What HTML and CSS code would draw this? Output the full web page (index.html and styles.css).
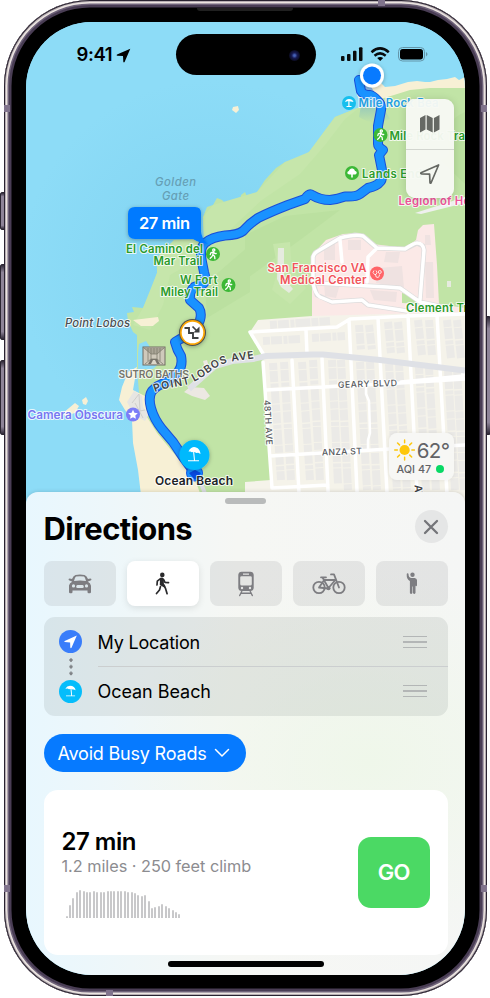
FILE: index.html
```html
<!DOCTYPE html>
<html lang="en">
<head>
<meta charset="utf-8">
<title>Directions</title>
<link rel="stylesheet" href="styles.css">
</head>
<body>
<div class="stage">
  <i class="key key-action"></i><i class="key key-up"></i><i class="key key-down"></i><i class="key key-power"></i>
  <div class="phone">
    <i class="band band-tl"></i><i class="band band-tr"></i><i class="band band-bl"></i><i class="band band-br"></i><i class="band band-top"></i><i class="band band-bottom"></i>
    <i class="speaker"></i>
    <main class="screen">
      <svg class="map" viewBox="26 22 439 490" width="439" height="490">
        <defs>
          <radialGradient id="sea" gradientUnits="userSpaceOnUse" cx="210" cy="270" r="190">
            <stop offset="0" stop-color="#80d3f1"/><stop offset="1" stop-color="#8ddcf7"/>
          </radialGradient>
          <linearGradient id="beam" x1="0" y1="0" x2="0" y2="1">
            <stop offset="0" stop-color="#0a74ff" stop-opacity=".6"/><stop offset="1" stop-color="#0a74ff" stop-opacity="0"/>
          </linearGradient>
          <filter id="soft" x="-50%" y="-50%" width="200%" height="200%"><feDropShadow dx="0" dy="1" stdDeviation="2" flood-opacity=".3"/></filter>
          <path id="lobos" d="M155 392 C164 388 178 387 189 384 C205 378 213 367 226 363 C236 360 246 360 256 358"/>
          <path id="trip" d="M359 80 361 91Q363 95 370 95C374 96 376 99 378 101Q382 105 381 110L378 126 378 144Q378 147 383 150L379 155 382 170Q383 180 380 182 377 186 368 188L360 194Q356 197 345 196.500 338 199 330 200 320 200 312 195 309 193 305 199L288 205Q270 212 258 218 249 224 243 231 238 235 225 235.500 212 237 205 243 199 248 202 262L204 272Q207 281 203 284L194 287Q189 292 190 300L199 308Q202 313 200 320L195 331Q182 338 175 342 177 350 181 356 183 366 178 372L167 382Q157 385 152 391 148 397 151 408 154 419 162 429L173 442 183 457 194 472"/>
          <g id="walker"><circle cx=".8" cy="-4" r="1.1"/><path d="M.4-2.3-.2.8 1.6 2.3 1.9 4.6M-.1.8-1.2 2.8-2.8 4.2M.3-2.2-2.2-1.2-2.7.6M.5-2 1.8-.3 3.2-.5"/></g>
        </defs>
        <rect x="26" y="22" width="440" height="490" fill="url(#sea)"/>
        <path class="sand" d="M465 77 459 80 455 77 447 79 438 80 430 82 425 82 417 81 408 82 395 86 385 87 377 79 362 82 357 95 362 104 465 110Z"/>
        <path class="green" d="M465 88 430 88 410 90 394 95 384 98 372 100 360 107 345 113 335 117 326 129 318 140 309 152 300 159 285 162 276 168 265 180 257 192 248 199 245 192 241 195 240 201 232 202 227 205 222 200 217 198 213 205 207 207 203 217 204 239 174 240 168 254 157 257 157 273 150 293 143 308 132 307 134 312 127 313 128 321 133 332 137 335 137 370 150 512 465 512Z"/>
        <path class="green-light" d="M360 107 335 117 309 152 285 162 257 192 213 205 203 217 204 240 174 240 157 257 157 273 143 308 133 325 150 330 163 305 170 275 205 255 238 222 262 200 300 174 325 145 345 119Z"/>
        <g class="green-deep">
          <path d="M465 112 Q444 120 448 145 Q452 158 440 160 L465 184Z"/>
          <path d="M205 284 250 245 250 292 207 318Z"/>
          <path d="M245 235 285 216 340 210 300 240 245 280Z"/>
        </g>
        <path class="green-light" d="M273 244 290 242 292 270 306 288 290 304 272 290 278 270Z"/>
        <path d="M278 248h6v30l9 11-4 4-8-6-4-8Zm169 33h4v6h-4Z" fill="#e6ebdf"/>
        <path d="M415 213 465 197V203L421 214Z" fill="#eff0ef"/>
        <path d="M138 353 139 344 146 341 150 347 164 350 164 359 153 369 138 369Z" fill="#8ddcf7"/>
        <path class="sand" d="M137 367 128 372 122 387 119 400 125 410 132 420 133 443 138 470 143 512 207 512 197 485 187 469 176 456 157 433 147 417 145 396 133 390Z"/>
        <path class="sand" d="M133 320 158 317 159 321 154 325 153 326 141 326Z"/>
        <path class="sand" d="M63 413 75 403 79 406 75 413 65 416ZM82 400 86 397 88 401 86 405 83 404ZM233 107l5-1 1 4-3 3-4-3Z"/>
        <path d="M127 402 134 391 142 396 143 407 149 414 145 421 134 415Z" fill="#e7e6e2"/>
        <path d="m132 403 7-9 1 17 5-1m-10-7 8 15" fill="none" stroke="#d0cfcb"/>
        <path d="M184 392 190 387 204 388 210 396 205 400 192 396ZM203 361l4-1 2 7-4 1Z" fill="#ece8e2"/>

        <path d="M312 255 326 240 343 234 359 233 373 244 405 248 416 240 418 230 423 225 434 224 437 265 439 304 465 308 465 320 312 322Z" fill="#fbe9e7"/>
        <path d="M402 293 411 295 423 304 402 303Z" fill="#bfe3a5"/>
        <path d="M258 320 312 316 465 312 465 512 245 512 245 482 271 480 263 355 250 332Z" fill="#f5f3ea"/>
        <path d="M324 248 335 243 335 260 324 260ZM348 240 361 240 361 250 348 250ZM324 283 340 284 336 298 325 296ZM379 268 402 266 404 288 376 283ZM386 252 400 252 398 263 384 262ZM425 235 430 235 431 245 425 245ZM425 262 433 262 434 298 426 298ZM370 290 397 292 396 302 374 300Z" fill="#efe2e1"/>
        <g class="blocks">
          <path d="M273 363 281 480M284 362 291 480M302 362 310 480M313 360 320 480M332 360 338 484M341 360 348 490M360 362 367 490M370 362 377 490M389 364 397 490M399 364 407 490M419 367 426 490M429 368 436 490M448 370 455 490M457 370 464 490M263 341 300 339M312 338 345 336M359 325 361 350M369 325 372 350M388 322 391 353M398 322 401 353M418 320 422 355M429 320 432 355M447 320 451 358M457 320 461 358M270 325 330 321"/>
        </g>
        <g class="road-edge">
          <path d="M420 298V302M313 283V257L315 253 340 238 355 235 363 236 377 248 405 249 417 243 423 246 424 250 420 300M313 283 317 295 332 302 362 300 368 305 407 311M317 283 387 287 400 288 420 302 439 306"/>
        </g>
        <g class="road">
          <path d="M313 283V257Q314 253 318 251L340 238Q355 234 363 236L377 248 405 249Q414 243 417 243 423 243 424 250L420 300M313 283Q315 294 320 297L332 302 362 300 368 305 407 311M317 283 387 287 400 288 420 302 439 306M340 240 342 262M377 248 368 257 367 282"/>
          <path d="M250 332 337 327 350 319 407 316 465 314M250 332 265 357M266 390 323 387 400 383 465 379M401 382 463 376V371M270 456 390 449 465 445M272 488 328 485M263 362 272 488M292 360 300 512M322 358 329 512M349 320 358 512M378 318 388 512M408 315 418 512M437 315 448 512M306 330 307 354"/>
          <path class="thin" d="M366 387 366 394 369 401 370 433 368 440 368 449"/>
        </g>
        <path d="M189 389 215 366 232 361 253 359 266 356 313 354.500 323 354.500 380 360 465 370.500" class="avenue"/>
        <path d="M199 478 212 512" stroke="#d9dbe0" stroke-width="4"/>

        <path d="M366 78 390 119Q374 127 359 117Z" fill="url(#beam)"/>
        <g class="route">
          <use href="#trip" class="route-case"/>
          <use href="#trip" class="route-fill"/>
        </g>
        <circle cx="194.500" cy="473" r="8" fill="#1691ff" stroke="#1556e8"/>
        <path d="m189 473 6 7 6-7-6-3Z" fill="#0648df"/>
        <circle cx="372" cy="75.500" r="12" fill="#fff" filter="url(#soft)"/><circle cx="372" cy="75.500" r="9" fill="#087aff"/>

        <g class="label">
          <text class="water" x="155" y="186" textLength="41">Golden</text>
          <text class="water" x="162" y="200" textLength="27">Gate</text>
          <text class="cape" x="65" y="327" textLength="65">Point Lobos</text>
          <text class="trail" x="126" y="253" textLength="77">El Camino del</text>
          <text class="trail" x="153.500" y="264.500" textLength="49">Mar Trail</text>
          <text class="trail" x="180" y="283.500" textLength="37.500">W Fort</text>
          <text class="trail" x="160.500" y="296" textLength="57.500">Miley Trail</text>
          <text class="beach" x="358.500" y="107" textLength="80">Mile Rock Bea</text>
          <text class="trail" x="389.500" y="139.500" textLength="75.500">Mile Rock Tra</text>
          <text class="trail" x="362" y="178" textLength="60">Lands End</text>
          <text class="museum" x="398.500" y="205" textLength="79">Legion of Hon</text>
          <text class="hospital" x="267.500" y="272" textLength="99">San Francisco VA</text>
          <text class="hospital" x="280" y="284" textLength="86.500">Medical Center</text>
          <text class="trail" x="406" y="312" textLength="75">Clement Trail</text>
          <text class="ruin" x="118.500" y="378" textLength="70.500">SUTRO BATHS</text>
          <text class="attraction" x="27.500" y="418.500" textLength="95.500">Camera Obscura</text>
          <text class="place" x="155" y="484.500" textLength="78">Ocean Beach</text>
          <text class="street" x="338" y="388" textLength="59" transform="rotate(-2 338 387)">GEARY BLVD</text>
          <text class="street" x="322" y="455.500" textLength="40" transform="rotate(-2 322 455)">ANZA ST</text>
          <text class="street" textLength="45" transform="translate(264 400) rotate(87)">48TH AVE</text>
          <text class="street-major" transform="translate(414.500 485) rotate(87)">AVE</text>
          <text class="street-major"><textPath href="#lobos" textLength="106">POINT LOBOS AVE</textPath></text>
        </g>

        <g class="walk-pin">
          <circle cx="213" cy="254" r="7"/><circle cx="228.500" cy="285" r="7"/><circle cx="380.500" cy="135" r="7"/><circle cx="352" cy="173" r="7"/>
          <use href="#walker" transform="translate(213 254)"/><use href="#walker" transform="translate(228.500 285)"/><use href="#walker" transform="translate(380.500 135)"/>
        </g>
        <path d="M347.500 173.500c-.6-2 1.500-2.500 1.500-2.500s.5-2.500 3-2.500 3 2.500 3 2.500 2.500.5 1.500 2.500c-.7 1.500-3.700 1-3.700 1v3h-1.600v-3s-3 .4-3.700-1Z" fill="#fff"/>
        <circle cx="349" cy="103" r="7" fill="#16bfee"/>
        <path d="M345 102q1-3 4-3 3.500 0 4.500 3l-4-.8v4.800h2v1h-5v-1h1.800v-5Z" fill="#fff"/>
        <circle cx="377" cy="273.500" r="7" fill="#ff6468"/>
        <g fill="none" stroke="#fff" stroke-width=".8"><path d="m374 270.500-1 2 1.500 2h1.500l1-2-1-2M375.500 274.500q0 3.500 2.500 3 1.500-.5 1.500-3"/><circle cx="379.800" cy="272" r="1.500"/></g>
        <circle cx="133" cy="414.500" r="7" fill="#7c7df7"/>
        <path d="m133 409.700 1.400 3.100 3.400.4-2.500 2.300.6 3.300-2.900-1.600-2.900 1.600.6-3.300-2.500-2.300 3.400-.4Z" fill="#fff"/>
        <g><rect x="143" y="347" width="22" height="18" fill="#cfc9bb" stroke="#716d63"/><path d="M144 348h20l-7 6h-6Z" fill="#aaa597"/><path d="M144 348 151 354v5l-6 5M164 348 157 354v5l6 5M151 354h6M151 359h6M148 348v13m12-13v13M151 348v6m6-6v6m-3-6v6" fill="none" stroke="#827e70" stroke-width=".8"/><path d="m151 359-3 5h12l-3-5Z" fill="#77736a"/><path d="m153 360-2 4h6l-2-4Z" fill="#ddd7c9"/></g>
        <g filter="url(#soft)"><circle cx="192.500" cy="332.500" r="13.500" fill="#50524f"/><circle cx="192.500" cy="332.500" r="12.500" fill="#fca600"/><circle cx="192.500" cy="332.500" r="10.800" fill="#fff"/></g>
        <path d="M184.500 328h4.500v5h4v5h5.500" fill="none" stroke="#3f4142" stroke-width="1.900"/>
        <path d="m192.500 326.500 4 4" stroke="#3f4142" stroke-width="1.700"/><path d="M199.500 326.500v6h-6Z" fill="#3f4142"/>
        <circle cx="194.500" cy="455" r="15" fill="#05b9fd" filter="url(#soft)"/>
        <path d="M188.500 451.500c1.500-3.500 4-4.500 5.500-4.500 4 .3 6.300 3.300 6.500 7l-2.300-1.200-1.800.3-1.900-1-.3.200.8 8h4v1H188v-1h6l-.9-8.300-1.300.3-1.500-.8Z" fill="#fff"/>
        <path d="M135 207H195Q201 207 201 213V231Q201 238 208 244Q199 243 193 239H135Q128 239 128 232V214Q128 207 135 207Z" fill="#067aff" filter="url(#soft)"/>
        <text class="eta" x="139" y="229" textLength="51">27 min</text>
      </svg>

      <header class="status">
        <div class="clock"><span>9:41</span><svg width="15" height="15" viewBox="0 0 15 15"><path d="M14.300.7 8.600 14q-.8 1-1.300-.3L7 8 1.300 7.700q-1.300-.5-.3-1.300Z"/></svg></div>
        <div class="island"><i></i></div>
        <svg class="signals" width="90" height="18" viewBox="0 0 90 18">
          <g fill="#080b0d"><rect x="1" y="10" width="3.500" height="5" rx="1"/><rect x="7" y="8" width="3.500" height="7" rx="1"/><rect x="13" y="4.700" width="3.500" height="10.300" rx="1"/><rect x="19" y="1.300" width="3.500" height="13.700" rx="1"/></g>
          <g fill="none" stroke="#080b0d" stroke-width="2.500"><path d="M31.500 6.200Q40 -1.400 48.800 6.200M34.500 9.800Q40 5 45.700 9.800"/></g><path d="m37.200 12 3 3 3-3q-3-2-6 0Z"/>
          <rect x="58.500" y="1.500" width="26" height="13.500" rx="4" fill="none" stroke="#6496aa"/><rect x="60" y="3" width="23" height="10.500" rx="2.700"/><path d="M86 6q3 2.200 0 4.500Z" fill="#6496aa"/>
        </svg>
      </header>

      <div class="map-tools">
        <button><svg width="22" height="20" viewBox="0 0 22 20"><path d="m1 4 5.500-3v14.500L1 18.500Zm6.700-3 6 3v14.500l-6-3Zm7.200 3 5.600-3v14.500l-5.600 3Z" fill="#666964"/></svg></button>
        <button><svg width="22" height="22" viewBox="0 0 22 22"><path d="M19.600 2 12 20q-.8.500-1-.5l-.4-8.300-8.200-.4q-1-.3-.4-1Z" fill="none" stroke="#666964" stroke-width="1.700" stroke-linejoin="round"/></svg></button>
      </div>
      <div class="weather">
        <div class="temp"><svg width="22" height="22" viewBox="-11 -11 22 22"><circle r="5.300" fill="#fdc70c"/><path d="M0-7.500V-10.300M0 7.500v2.800M-7.500 0h-2.800M7.500 0h2.800M-5.300-5.300l-2-2M5.300-5.300l2-2M-5.300 5.300l-2 2M5.300 5.300l2 2" stroke="#fdc70c" stroke-width="1.500" stroke-linecap="round"/></svg><span>62°</span></div>
        <div class="aqi"><span>AQI 47</span><i></i></div>
      </div>

      <section class="sheet">
        <i class="grabber"></i>
        <div class="heading"><h1>Directions</h1><button class="close"><svg width="16" height="16" viewBox="0 0 16 16"><path d="m2 2 12 12M14 2 2 14" stroke="#747579" stroke-width="2.300" stroke-linecap="round"/></svg></button></div>
        <nav class="modes">
          <button><svg width="24" height="20" viewBox="0 0 24 20"><path fill-rule="evenodd" d="M4.300 7.800 2.700 6.900Q.3 6.700.5 5.300q.4-1.300 3.500-.3Q5.500 1.300 7.500.9q4.500-.8 9 0 2 .4 3.500 4.100 3.100-1 3.500.3.200 1.400-2.200 1.600l-1.600.9q2.800 1 3.300 4V18q0 1.200-1.300 1.200h-1q-1.200 0-1.200-1.200v-1.500h-15V18q0 1.200-1.200 1.200h-1Q1 19.200 1 18v-6.500q.5-2.700 3.300-3.700ZM6 6.900q6-.7 12 0-.9-3.600-2-4.300-4-.8-8 0-1.100.7-2 4.300ZM5.500 10.300a1.600 1.600 0 1 0 0 3.200 1.600 1.600 0 1 0 0-3.200Zm13 0a1.600 1.600 0 1 0 0 3.200 1.600 1.600 0 1 0 0-3.200ZM9.500 11q-1.300 0-1.300 1.500T9.500 14h5q1.300 0 1.300-1.500T14.500 11Z"/></svg></button>
          <button class="active"><svg width="16" height="24" viewBox="0 0 16 24"><circle cx="7.300" cy="2.900" r="2.300"/><path d="M5.500 6.700 2.300 9.200 2 13M8.500 7.500 10 10.300l3.500.3M9 13.500l1.600 3.200 1.500 5M5.500 14.500 4.500 18 1.500 21.500" fill="none" stroke="#29292b" stroke-width="1.700" stroke-linecap="round" stroke-linejoin="round"/><path d="M5 6.300Q7 4.700 8.700 6.700l.2 5L10.500 14.200 9.300 15.600 4.800 13Z"/></svg></button>
          <button><svg width="20" height="26" viewBox="0 0 20 26"><path fill-rule="evenodd" d="M5.500.8h9q2.800.2 3.200 3V17q-.4 3-3.200 3h-9q-2.800 0-3.200-3V3.800q.4-2.800 3.200-3ZM7 2.400v1.400h6V2.400ZM4.200 6.500v6.500q0 1.500 1.500 1.500h8.600q1.500 0 1.500-1.500V6.500q0-1.300-1.300-1.300h-9q-1.300 0-1.300 1.300ZM6 15.800a1.200 1.200 0 1 0 0 2.400 1.200 1.200 0 1 0 0-2.400Zm8 0a1.200 1.200 0 1 0 0 2.400 1.200 1.200 0 1 0 0-2.400Z"/><path d="m5.700 20.500-2 4m10.600-4 2 4M5 22.300h10" stroke="#7d7d81" stroke-width="1.400" stroke-linecap="round"/></svg></button>
          <button><svg width="34" height="22" viewBox="0 0 34 22"><g fill="none" stroke="#7d7d81" stroke-width="1.800" stroke-linejoin="round" stroke-linecap="round"><circle cx="7" cy="14.500" r="5.700"/><circle cx="27" cy="14.500" r="5.700"/><path d="M7 14.500 12 7.300 16.500 15 23.300 7H12L10.500 4.500M7 14.500 16 15.500M9 4.300h5M27 14.500 22 1.400h-3"/></g><circle cx="16.500" cy="15.300" r="2" fill="#7d7d81"/></svg></button>
          <button><svg width="14" height="23" viewBox="0 0 14 23"><circle cx="7.500" cy="2.800" r="2.200"/><path d="M6 5.900h3.700q2 .3 2.300 2.200v5.500q-.8 1.200-1.500 0V21q-1.200 2-2.500.1v-6.500h-.6v6.500Q6 23 4.900 21.100V9Q1.500 7.300 1.700 2.500q0-1.500 1.300-1.300.8.300.6 2Q3.700 5.400 6 5.900Z"/></svg></button>
        </nav>
        <div class="stops">
          <div class="stop"><span class="dot origin"><svg width="23" height="23" viewBox="0 0 23 23"><path d="M17.800 5.400 12.500 17.700q-.7 1-1.200-.3l-.2-5-5.200-.3q-1.300-.4-.2-1.200Z"/></svg></span><p>My Location</p><i class="handle"></i></div>
          <i class="link"></i>
          <div class="stop"><span class="dot beach-dot"><svg width="23" height="23" viewBox="0 0 23 23"><path d="M6.300 8.800Q8 6 11 5.800q4.800.2 5.600 4.500l-1.800-.9-1.300.2-1-.8.6 6.700h3v.8H7v-.8h5.200l-.7-6.600-1.600.4-1.200-.7Z"/></svg></span><p class="wide">Ocean Beach</p><i class="handle"></i></div>
        </div>
        <button class="option"><span>Avoid Busy Roads</span><svg width="16" height="10" viewBox="0 0 16 10"><path d="m1.500 1.500 6.500 6.500 6.500-6.500" fill="none" stroke="#fff" stroke-width="1.500" stroke-linecap="round" stroke-linejoin="round"/></svg></button>
        <article class="result">
          <div class="summary">
            <h2>27 min</h2>
            <p>1.2 miles · 250 feet climb</p>
            <div class="climb">
              <i style="height:2px"></i><i style="height:13px"></i><i style="height:20px"></i><i style="height:26px"></i><i style="height:28px"></i><i style="height:27px"></i><i style="height:26px"></i><i style="height:26px"></i><i style="height:27px"></i><i style="height:26px"></i><i style="height:26px"></i><i style="height:26px"></i><i style="height:27px"></i><i style="height:27px"></i><i style="height:27px"></i><i style="height:27px"></i><i style="height:27px"></i><i style="height:27px"></i><i style="height:26px"></i><i style="height:26px"></i><i style="height:25px"></i><i style="height:23px"></i><i style="height:22px"></i><i style="height:23px"></i><i style="height:17px"></i><i style="height:10px"></i><i style="height:11px"></i><i style="height:12px"></i><i style="height:14px"></i><i style="height:12px"></i><i style="height:10px"></i><i style="height:8px"></i><i style="height:6px"></i><i style="height:4px"></i>
            </div>
          </div>
          <button class="go">GO</button>
        </article>
        <i class="home"></i>
      </section>
    </main>
  </div>
</div>
</body>
</html>
```
FILE: styles.css
```css
* { box-sizing: border-box; }
body { margin: 0; background: #fff; font-family: Inter, "Liberation Sans", sans-serif; color: #000; }
button { border: 0; padding: 0; margin: 0; font: inherit; background: none; }
h1, h2, p { margin: 0; }
i { display: block; }
svg { display: block; }

.stage { position: relative; width: 490px; height: 998px; padding-left: 4px; overflow: hidden; }
.phone {
  position: relative; width: 483px; height: 996px; padding: 22px 22px 21px; border-radius: 86px; background: #000;
  box-shadow: inset 0 0 0 1px #292330, inset 0 0 0 2px #b7aeb3, inset 0 0 0 3.500px #ece5e1, inset 0 0 0 5px #6e6279, inset 0 0 0 7.500px #493d54;
}
.key { position: absolute; width: 6px; border: 1px solid #2c2632; border-radius: 2px; background: linear-gradient(#2f2937, #8e8498 10% 90%, #2f2937); }
.key-action { left: 0; top: 192px; height: 38px; }
.key-up { left: 0; top: 264px; height: 76px; }
.key-down { left: 0; top: 360px; height: 75px; }
.key-power { right: -1px; top: 316px; height: 119px; }
.band { position: absolute; width: 6px; height: 7px; background: #80738c; }
.band-tl { left: 0; top: 105px; }
.band-tr { right: 0; top: 105px; }
.band-bl { left: 0; bottom: 104px; }
.band-br { right: 0; bottom: 104px; }
.band-top { right: 102px; top: 0; width: 7px; height: 6px; }
.band-bottom { left: 102px; bottom: 0; width: 7px; height: 6px; }
.speaker { position: absolute; left: 193px; top: 8px; width: 96px; height: 3px; background: #202020; border-radius: 0 0 3px 3px; }

.screen { position: relative; display: flex; flex-direction: column; width: 439px; height: 953px; border-radius: 66px; overflow: hidden; background: #8ddcf7; }
.map { position: absolute; left: 0; top: 0; }
.sand { fill: #f7f0d5; }
.green { fill: #c1e4a6; }
.green-light { fill: #c6e6ab; }
.green-deep { fill: #bbe0a0; }
.blocks { fill: none; stroke: #ebeae7; stroke-width: 8; stroke-dasharray: 7 1 11 1.500 4 1 15 1; }
.road, .road-edge { fill: none; stroke: #fff; stroke-width: 3.500; stroke-linejoin: round; stroke-linecap: round; }
.road-edge { stroke: #dedddd; stroke-width: 5; }
.road .thin { stroke-width: 2.500; }
.avenue { fill: none; stroke: #dfe1e6; stroke-width: 6; }
.route { fill: none; stroke-linecap: round; stroke-linejoin: round; }
.route-case { stroke: #194fd9; stroke-width: 10; }
.route-fill { stroke: #1992ff; stroke-width: 8; }
.label { font-size: 11.300px; font-weight: 600; stroke: rgba(255, 255, 255, .8); stroke-width: 2px; stroke-linejoin: round; paint-order: stroke; }
.water { fill: #669fb5; font-style: italic; font-weight: 500; stroke: none; }
.cape { fill: #4b4e50; font-style: italic; font-weight: 500; }
.trail { fill: #2b9b2b; }
.beach { fill: #249fe1; }
.museum { fill: #ee5299; }
.hospital { fill: #f2525a; }
.ruin { fill: #77766a; font-size: 10.500px; }
.attraction { fill: #7778f2; font-size: 11.800px; }
.place { fill: #202327; font-size: 12px; }
.street { fill: #55585c; font-size: 8.800px; font-weight: 500; }
.street-major { fill: #3f4144; font-size: 10.500px; }
.eta { fill: #fff; font-size: 16.500px; font-weight: 600; }
.walk-pin circle { fill: #3cb836; }
.walk-pin use { fill: none; stroke: #fff; stroke-width: 1.300; stroke-linecap: round; stroke-linejoin: round; }

.status { position: relative; display: grid; grid-template-columns: 150px 140px 1fr; padding-top: 12px; }
.clock { display: flex; gap: 4px; padding: 9px 0 0 50.500px; font-size: 18.500px; line-height: 23px; font-weight: 600; letter-spacing: -.4px; }
.clock svg { margin: 4.500px 0 0 -.500px; }
.island { height: 41px; border-radius: 21px; background: #000; }
.island i { width: 11px; height: 11px; margin: 15.500px 0 0 113px; border-radius: 50%; background: radial-gradient(circle, #4662b8 0 10%, #171b54 35%, #080817 75%); }
.signals { margin: 12px 0 0 24px; }

.map-tools { position: absolute; left: 379.500px; top: 77px; width: 48.500px; height: 99px; border-radius: 9px; background: rgba(247, 249, 244, .96); box-shadow: 0 1px 9px rgba(0, 0, 0, .14); display: grid; grid-template-rows: 1fr 1fr; }
.map-tools button { display: grid; place-items: center; }
.map-tools button + button { border-top: 1px solid #d2d5cf; }
.weather { position: absolute; left: 362.500px; top: 411px; width: 65px; height: 47px; border-radius: 8px; background: rgba(247, 247, 245, .96); box-shadow: 0 0 4px rgba(0, 0, 0, .08); padding: 5px 4px 0 5px; color: #626366; }
.temp { display: flex; align-items: center; gap: 2px; height: 24px; font-size: 20.500px; letter-spacing: -.6px; }
.aqi { display: flex; align-items: center; gap: 5px; padding-left: 3px; height: 14px; font-size: 10.800px; font-weight: 500; white-space: nowrap; }
.aqi i { width: 8px; height: 8px; border-radius: 50%; background: #08d965; }

.sheet {
  position: relative; margin-top: auto; height: 483px; padding: 6px 17.500px 0 17.500px; border-radius: 12px 12px 0 0; display: flex; flex-direction: column;
  background: radial-gradient(ellipse 260px 190px at 78% 56%, #eff7ea, rgba(239, 247, 234, 0)), linear-gradient(90deg, #e8f7fe, #f6f7f4 48%, #f5f6f5);
  box-shadow: 0 0 4px rgba(0, 0, 0, .17);
}
.grabber { width: 41px; height: 5.500px; border-radius: 3px; background: #b9bbbb; align-self: center; }
.heading { display: flex; justify-content: space-between; align-items: center; height: 34px; margin-top: 6.500px; }
h1 { font-size: 31px; line-height: 34px; font-weight: 700; letter-spacing: -.62px; padding-top: 3px; }
.close { width: 33px; height: 33px; border-radius: 50%; background: #e5e6e6; display: grid; place-items: center; margin-top: -1px; }
.modes { display: grid; grid-template-columns: repeat(5, 1fr); gap: 11px; height: 45px; margin-top: 17px; }
.modes button { display: grid; place-items: center; border-radius: 8px; background: rgba(120, 120, 124, .14); fill: #7d7d81; }
.modes .active { background: #fff; fill: #29292b; box-shadow: 0 2px 7px rgba(0, 0, 0, .1); }
.stops { position: relative; height: 98.500px; margin-top: 11px; border-radius: 11px; background: rgba(100, 105, 105, .13); }
.stop { display: flex; align-items: center; height: 49.500px; padding: 0 21px 0 15.500px; }
.stop p { flex: 1; font-size: 18px; letter-spacing: -.2px; margin-left: 15.500px; height: 49px; line-height: 51px; }
.stop .wide { letter-spacing: -.05px; line-height: 50px; }
.stop:last-child { height: 49px; }
.stop:last-child p { box-shadow: 0 -1px #cbcecf; margin-right: -45px; padding-right: 45px; }
.stop:last-child .handle { z-index: 1; }
.stop:last-child::after { content: ""; position: absolute; right: 0; top: 48.500px; width: 21px; height: 1px; background: #cbcecf; }
.dot { width: 23px; height: 23px; border-radius: 50%; fill: #fff; }
.origin { background: #397dfa; }
.beach-dot { background: #05bdfb; }
.handle { width: 24px; height: 13px; margin-top: 1px; background: linear-gradient(#b3b6b6 0 1.500px, transparent 1.500px 5.500px, #b3b6b6 5.500px 7px, transparent 7px 11px, #b3b6b6 11px 12.500px, transparent 12.500px); }
.link { position: absolute; left: 25px; top: 41px; width: 4px; height: 18px; background: radial-gradient(circle at 50% 2px, #808387 0 1.400px, transparent 1.900px) 0 0 / 4px 6.700px; }
.option { display: flex; align-items: center; gap: 7px; align-self: flex-start; width: 202px; height: 37.500px; margin-top: 18.500px; padding-left: 14px; border-radius: 19px; background: #067aff; color: #fff; font-size: 18px; letter-spacing: -.2px; white-space: nowrap; }
.option span { padding-top: 1px; }
.result { display: flex; justify-content: space-between; height: 165.500px; margin-top: 18px; padding: 0 18px; border-radius: 14px; background: #fff; }
h2 { margin-top: 37px; font-size: 24px; line-height: 29px; font-weight: 600; letter-spacing: -.5px; }
.summary p { color: #8c8c90; font-size: 16.300px; line-height: 21px; letter-spacing: -.03px; white-space: nowrap; }
.climb { display: flex; align-items: flex-end; gap: 1.430px; height: 29px; margin: 12.500px 0 0 4px; }
.climb i { width: 2px; background: #c8c8ca; border-radius: 1px 1px 0 0; }
.go { width: 71.500px; height: 71.500px; margin-top: 47px; border-radius: 13px; background: #4bd964; color: #fff; font-size: 22px; font-weight: 600; letter-spacing: -.6px; }
.home { position: absolute; left: 142px; bottom: 8.500px; width: 156px; height: 5.500px; border-radius: 3px; background: #000; }
```
